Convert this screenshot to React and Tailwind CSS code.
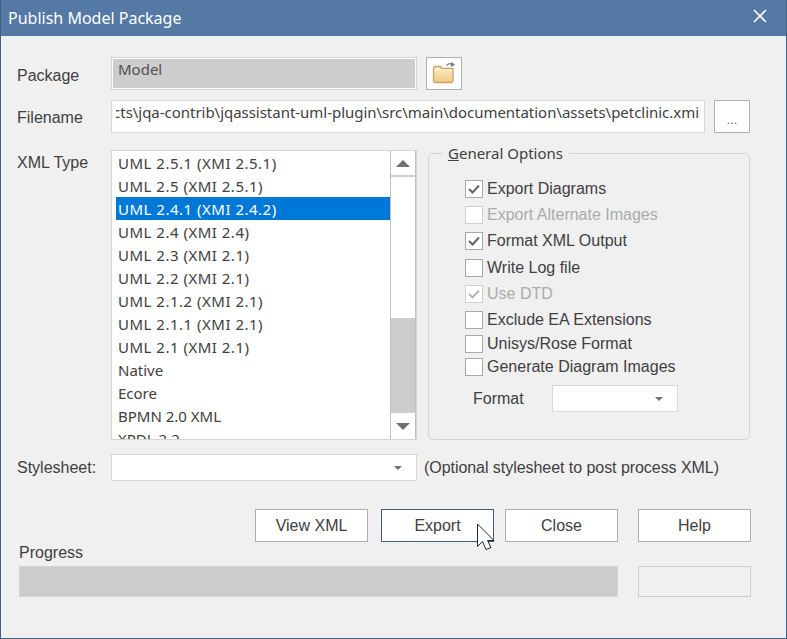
import { X } from 'lucide-react'

const xmlTypes = [
  'UML 2.5.1 (XMI 2.5.1)',
  'UML 2.5 (XMI 2.5.1)',
  'UML 2.4.1 (XMI 2.4.2)',
  'UML 2.4 (XMI 2.4)',
  'UML 2.3 (XMI 2.1)',
  'UML 2.2 (XMI 2.1)',
  'UML 2.1.2 (XMI 2.1)',
  'UML 2.1.1 (XMI 2.1)',
  'UML 2.1 (XMI 2.1)',
  'Native',
  'Ecore',
  'BPMN 2.0 XML',
  'XPDL 2.2',
]

const options = [
  { label: 'Export Diagrams', checked: true, h: 'h-[26px]' },
  { label: 'Export Alternate Images', disabled: true, h: 'h-[26px]' },
  { label: 'Format XML Output', checked: true, h: 'h-[26px]' },
  { label: 'Write Log file', h: 'h-[27px]' },
  { label: 'Use DTD', checked: true, disabled: true, h: 'h-[26px]' },
  { label: 'Exclude EA Extensions', h: 'h-[26px]' },
  { label: 'Unisys/Rose Format', h: 'h-[22px]' },
  { label: 'Generate Diagram Images', h: 'h-[24px]' },
]

function Caret() {
  return <div className="w-0 h-0 border-x-[4px] border-x-transparent border-t-[4px] border-t-[#707070]" />
}

function Option({ label, checked, disabled, h }) {
  return (
    <div className={`flex items-center gap-1 ${h} ${disabled ? 'text-[#ababab]' : 'text-[#404040]'}`}>
      <div className={`w-[18px] h-[18px] bg-white border flex items-center justify-center ${disabled ? 'border-[#cfcfcf]' : 'border-[#a9a9a9]'}`}>
        {checked && (
          <svg width="12" height="10" viewBox="0 0 12 10" fill="none">
            <path d="M1 5 L4.5 8.5 L11 1.5" stroke={disabled ? '#b5b5b5' : '#666666'} strokeWidth="2" />
          </svg>
        )}
      </div>
      <span className="text-[16px]">{label}</span>
    </div>
  )
}

function Btn({ children, focus, className = '' }) {
  return (
    <button className={`w-[113px] h-[33px] bg-white border text-[16px] text-[#404040] ${focus ? 'border-[#3f5a78]' : 'border-[#adadad]'} ${className}`}>
      {children}
    </button>
  )
}

function FolderIcon() {
  return (
    <svg width="24" height="24" viewBox="0 0 24 24">
      <defs>
        <linearGradient id="folderFill" x1="0" y1="0" x2="0" y2="1">
          <stop offset="0" stopColor="#fdeec4" />
          <stop offset="1" stopColor="#efca84" />
        </linearGradient>
      </defs>
      <path d="M14.5 3.5 C16 1.5 18.5 1.2 20 2.5" fill="none" stroke="#8f8dac" strokeWidth="1.5" />
      <path d="M19.5 0 L23 2.8 L19 5 Z" fill="#6c6a8e" />
      <path d="M1.5 7.5 V18.5 Q1.5 20.5 3.5 20.5 H19 Q21 20.5 21 18.5 V6.5 H10 L8.5 4.5 H3.5 Q1.5 4.5 1.5 7.5 Z" fill="url(#folderFill)" stroke="#cda262" strokeWidth="1.3" />
      <path d="M2.5 8 H20" stroke="#fff5d8" />
    </svg>
  )
}

function Cursor() {
  return (
    <svg className="absolute left-[476px] top-[523px]" width="20" height="30" viewBox="0 0 20 30">
      <path d="M0.5 1 V23.5 L5.5 18.5 L9 26.5 L14 24.5 L10.5 17.5 H17 Z" fill="#ffffff" stroke="#1d2733" strokeWidth="1" />
    </svg>
  )
}

export default function App() {
  return (
    <div className="relative w-[787px] h-[639px] bg-[#f0f0f0] border-x border-b border-[#3f6184] font-['Liberation_Sans',sans-serif] text-[#404040] flex flex-col overflow-hidden">
      <div className="h-9 shrink-0 bg-[#5579a5] text-white flex items-center justify-between pl-[7px] pr-[15px] font-['Noto_Sans',sans-serif] text-[16px]">
        <span>Publish Model Package</span>
        <X size={22} strokeWidth={1.8} className="-mt-1" />
      </div>

      <div className="pl-4 flex flex-col">
        <div className="flex mt-[21px]">
          <div className="w-[94px] text-[16px] pt-[7px]">Package</div>
          <div className="w-[306px] h-[33px] bg-[#cdcdcd] border-2 border-[#fbfbfb] outline outline-[#d4d4d4] -outline-offset-1 px-[5px] font-['Noto_Sans',sans-serif] text-[15px] leading-[20px] text-[#505050]">
            Model
          </div>
          <div className="ml-[9px] w-9 h-[33px] bg-white border border-[#adadad] flex items-center justify-center">
            <FolderIcon />
          </div>
        </div>

        <div className="flex mt-[10px]">
          <div className="w-[94px] text-[16px] pt-[6px]">Filename</div>
          <div className="w-[594px] h-[33px] bg-white border border-[#d8d8d8] pl-[4px] pr-[5px] pb-[8px] flex items-center">
            <div className="flex-1 overflow-hidden flex justify-end font-['Noto_Sans',sans-serif] text-[15px] tracking-[-0.03px] whitespace-nowrap">
              ects\jqa-contrib\jqassistant-uml-plugin\src\main\documentation\assets\petclinic.xmi
            </div>
          </div>
          <div className="ml-[9px] w-9 h-[33px] bg-white border border-[#adadad] flex items-center justify-center pt-[6px] text-[13px] text-[#707070]">
            ...
          </div>
        </div>

        <div className="flex mt-[17px]">
          <div className="w-[94px] text-[16px] pt-[1px]">XML Type</div>
          <div className="w-[306px] h-[290px] bg-white border border-[#d4d4d4] flex overflow-hidden">
            <div className="flex-1 overflow-hidden pl-[4px]">
              {xmlTypes.map((t, i) => (
                <div
                  key={t}
                  className={`h-[23px] pl-[2px] pt-[1px] flex items-center font-['Noto_Sans',sans-serif] text-[15px] whitespace-nowrap ${t.startsWith('UML') ? 'tracking-[0.5px]' : ''} ${i === 2 ? 'bg-[#0078d7] text-white' : ''}`}
                >
                  {t}
                </div>
              ))}
            </div>
            <div className="w-[26px] bg-[#cdcdcd] border-x border-[#c0c0c0] flex flex-col justify-between">
              <div>
                <div className="h-[26px] bg-white border-b-2 border-[#cdcdcd] flex items-center justify-center">
                  <div className="w-0 h-0 border-x-[7px] border-x-transparent border-b-[7px] border-b-[#707070]" />
                </div>
                <div className="h-[141px] bg-white" />
              </div>
              <div className="h-[26px] bg-white flex items-center justify-center">
                <div className="w-0 h-0 border-x-[7px] border-x-transparent border-t-[7px] border-t-[#707070]" />
              </div>
            </div>
          </div>

          <fieldset className="ml-[11px] -mt-[7px] w-[322px] h-[297px] border border-[#d4d4d4] rounded-[5px]">
            <legend className="ml-[13px] px-[6px] font-['Noto_Sans',sans-serif] text-[15px] leading-[20px]">
              <span className="underline">G</span>eneral Options
            </legend>
            <div className="pl-9">
              <div className="mt-[13px]">
                {options.map((o) => (
                  <Option key={o.label} {...o} />
                ))}
              </div>
              <div className="flex items-center mt-[6px] ml-[8px] text-[16px]">
                <span className="w-[79px]">Format</span>
                <div className="w-[126px] h-[27px] bg-white border border-[#d8d8d8] flex items-center justify-end pr-[14px]">
                  <Caret />
                </div>
              </div>
            </div>
          </fieldset>
        </div>

        <div className="flex items-center mt-[14px]">
          <div className="w-[94px] text-[16px]">Stylesheet:</div>
          <div className="w-[306px] h-[27px] bg-white border border-[#d8d8d8] flex items-center justify-end pr-[14px]">
            <Caret />
          </div>
          <span className="ml-[7px] text-[16px] tracking-[-0.05px]">(Optional stylesheet to post process XML)</span>
        </div>

        <div className="flex mt-[28px] ml-[238px]">
          <Btn>View XML</Btn>
          <Btn focus className="ml-[13px]">Export</Btn>
          <Btn className="ml-[11px]">Close</Btn>
          <Btn className="ml-[20px]">Help</Btn>
        </div>

        <div className="ml-[2px] mt-[1px] text-[16px] leading-[20px]">Progress</div>
        <div className="flex ml-[2px] mt-[3px]">
          <div className="w-[599px] h-[31px] bg-[#cdcdcd] border border-[#d6d6d6]" />
          <div className="ml-5 w-[113px] h-[31px] border border-[#cdcdcd]" />
        </div>
      </div>

      <Cursor />
    </div>
  )
}
